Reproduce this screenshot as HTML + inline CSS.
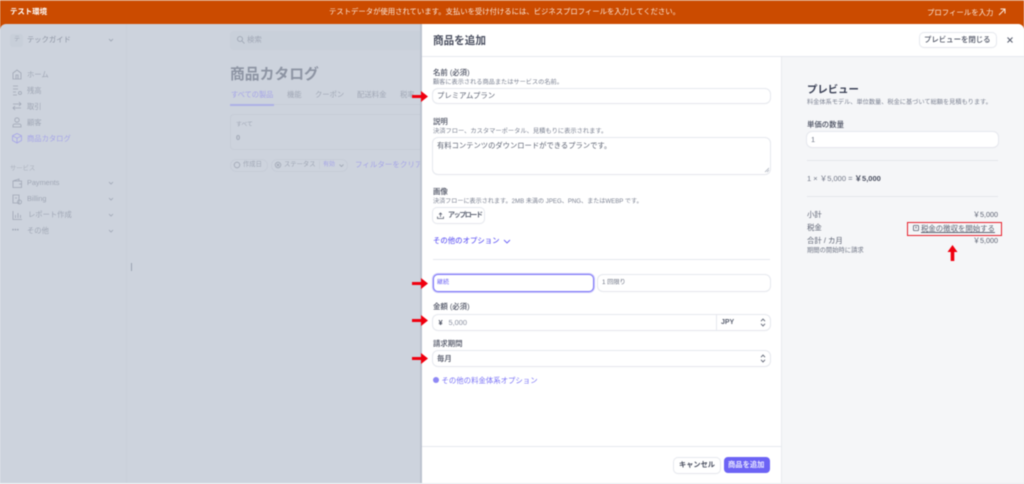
<!DOCTYPE html>
<html lang="ja"><head><meta charset="utf-8"><title>商品を追加</title>
<style>
*{box-sizing:border-box}
html,body{margin:0;padding:0;width:1024px;height:484px;overflow:hidden;background:#eef0f4}
body{font-family:"Liberation Sans","Noto Sans CJK JP",sans-serif;position:relative;color:#3c4257}
#r{position:absolute;left:0;top:0;width:1024px;height:484px;overflow:hidden;filter:blur(.4px)}
#bg{position:absolute;left:0;top:0;width:422px;height:484px}
.a{position:absolute;white-space:nowrap}
.t{position:absolute;white-space:nowrap;line-height:14px;height:14px}
.box{position:absolute;background:#fff;border-radius:5px;box-shadow:0 0 0 1px #e6e8ee,0 1px 1px rgba(60,66,87,.08)}
svg{position:absolute;overflow:visible}
.side{color:#a0a7b5;font-size:7.3px}
</style></head><body><div id="r">
<!-- banner -->
<div class="a" style="left:0;top:0;width:1024px;height:30px;background:#cb4b00;border-top:1px solid #dc8d5c"></div>
<div class="t" style="left:10px;top:5px;color:#fff;font-size:7.4px;font-weight:bold">テスト環境</div>
<div class="t" style="left:329px;top:5px;color:#fbe6d8;font-size:7.35px">テストデータが使用されています。支払いを受け付けるには、ビジネスプロフィールを入力してください。</div>
<div class="t" style="left:927px;top:6px;color:#fbe6d8;font-size:7.4px">プロフィールを入力</div>
<svg style="left:998px;top:8px" width="8" height="8" fill="none" stroke="#fbe6d8" stroke-width="1"><path d="M1 7L7 1M2.500 1H7V5.500"/></svg>
<!-- backdrop -->
<div class="a" style="left:0;top:24px;width:1024px;height:459px;background:#cdd3dd;border-radius:6px 6px 0 0"></div>
<div id="bg">
<div class="a" style="left:126px;top:24px;width:1px;height:459px;background:#c9d0da"></div>
<div class="a" style="left:131px;top:263px;width:1px;height:8px;background:#9aa2b0"></div>
<div class="a" style="left:10px;top:34px;width:13px;height:13px;border-radius:3px;background:#c8cfd9"></div>
<div class="t side" style="left:14px;top:33px;font-size:6px">テ</div>
<div class="t" style="left:27px;top:33px;font-size:7.3px;color:#8d94a3">テックガイド</div>
<svg style="left:108px;top:38px" width="6" height="4" fill="none" stroke="#9aa2b0" stroke-width=".8"><path d="M1 1l2 2 2-2"/></svg>
<!-- nav -->
<svg style="left:12px;top:69px" width="10" height="10" fill="none" stroke="#a0a7b5" stroke-width=".8"><path d="M1 10V4l4-3 4 3v6zM4 10V6h2v4"/></svg>
<svg style="left:12px;top:85px" width="10" height="10" fill="none" stroke="#a0a7b5" stroke-width=".8"><path d="M1 1h5M1 4h5M1 7h3M1 10h4"/><circle cx="8" cy="8" r="1.500"/></svg>
<svg style="left:12px;top:101px" width="10" height="10" fill="none" stroke="#a0a7b5" stroke-width=".8"><path d="M1 3h8M7 1l2 2-2 2M9 7H1M3 5L1 7l2 2"/></svg>
<svg style="left:12px;top:117px" width="10" height="10" fill="none" stroke="#a0a7b5" stroke-width=".8"><circle cx="5" cy="3" r="2.200"/><path d="M1 10V8.500C1 7.500 2 7 3 7h4c1 0 2 .5 2 1.500V10z"/></svg>
<svg style="left:12px;top:133px" width="10" height="10" fill="none" stroke="#a5a4e8" stroke-width=".8"><path d="M5 .5L9.500 2.800V7.500L5 10 .5 7.500V2.800zM.5 2.800L5 5.200 9.500 2.800M5 5.200V10"/></svg>
<div class="t side" style="left:27px;top:68px">ホーム</div>
<div class="t side" style="left:27px;top:84px">残高</div>
<div class="t side" style="left:27px;top:100px">取引</div>
<div class="t side" style="left:27px;top:116px">顧客</div>
<div class="t" style="left:27px;top:132px;font-size:7.3px;color:#a5a4e8">商品カタログ</div>
<div class="t" style="left:10px;top:162px;font-size:6.3px;color:#adb3bf">サービス</div>
<svg style="left:12px;top:178px" width="10" height="10" fill="none" stroke="#a0a7b5" stroke-width=".8"><path d="M1 3h8.500v6.500H1zM1 3l6-2v2M7 6h2.500"/></svg>
<svg style="left:12px;top:194px" width="10" height="10" fill="none" stroke="#a0a7b5" stroke-width=".8"><path d="M1 1h6v8H1zM3 4h2"/><circle cx="7.500" cy="8" r="2"/></svg>
<svg style="left:12px;top:210px" width="10" height="10" fill="none" stroke="#a0a7b5" stroke-width=".8"><path d="M1 1v8.500h9M3.500 8V5M6 8V3M8.500 8V5"/></svg>
<div class="t" style="left:12px;top:224px;font-size:6px;color:#a0a7b5;letter-spacing:.3px">•••</div>
<div class="t side" style="left:27px;top:176px;font-size:7.3px">Payments</div>
<div class="t side" style="left:27px;top:192px;font-size:7.3px">Billing</div>
<div class="t side" style="left:28px;top:208px">レポート作成</div>
<div class="t side" style="left:27px;top:224px">その他</div>
<svg style="left:108px;top:181px" width="6" height="4" fill="none" stroke="#a0a7b5" stroke-width=".8"><path d="M1 1l2 2 2-2"/></svg>
<svg style="left:108px;top:197px" width="6" height="4" fill="none" stroke="#a0a7b5" stroke-width=".8"><path d="M1 1l2 2 2-2"/></svg>
<svg style="left:108px;top:213px" width="6" height="4" fill="none" stroke="#a0a7b5" stroke-width=".8"><path d="M1 1l2 2 2-2"/></svg>
<svg style="left:108px;top:229px" width="6" height="4" fill="none" stroke="#a0a7b5" stroke-width=".8"><path d="M1 1l2 2 2-2"/></svg>
<!-- main -->
<div class="a" style="left:230px;top:31px;width:192px;height:19px;background:#c9d0da;border-radius:4px 0 0 4px"></div>
<svg style="left:237px;top:36px" width="8" height="8" fill="none" stroke="#9aa2b0" stroke-width=".8"><circle cx="3" cy="3" r="2.500"/><path d="M5 5l2.500 2.500"/></svg>
<div class="t" style="left:247px;top:33px;font-size:7.4px;color:#a0a7b5">検索</div>
<div class="a" style="left:230px;top:65px;font-size:14.8px;line-height:20px;font-weight:bold;color:#8d94a3">商品カタログ</div>
<div class="t" style="left:231px;top:88px;font-size:7.2px;color:#a5a4e8">すべての製品</div>
<div class="t side" style="left:287px;top:88px">機能</div>
<div class="t side" style="left:315px;top:88px">クーポン</div>
<div class="t side" style="left:357px;top:88px;font-size:7.4px">配送料金</div>
<div class="t side" style="left:400px;top:88px">税率</div>
<div class="a" style="left:230px;top:104px;width:192px;height:1px;background:#c6ccd7"></div>
<div class="a" style="left:230px;top:104px;width:44px;height:2px;background:#aeb0e6"></div>
<div class="a" style="left:230px;top:114px;width:192px;height:36px;border:1px solid #c6ccd7;border-right:0;border-radius:4px 0 0 4px"></div>
<div class="t side" style="left:236px;top:118px;font-size:5.8px">すべて</div>
<div class="t" style="left:236px;top:131px;font-size:7.5px;font-weight:bold;color:#a0a7b5">0</div>
<div class="a" style="left:230px;top:159px;width:38px;height:13px;border:1px solid #c6ccd7;border-radius:7px"></div>
<div class="a" style="left:271px;top:159px;width:77px;height:13px;border:1px solid #c6ccd7;border-radius:7px"></div>
<svg style="left:234px;top:162px" width="6" height="6" fill="none" stroke="#a0a7b5" stroke-width=".8"><circle cx="3" cy="3" r="2.800"/></svg>
<svg style="left:275px;top:162px" width="6" height="6" fill="none" stroke="#a0a7b5" stroke-width=".8"><circle cx="3" cy="3" r="2.800"/><path d="M1.800 1.800l2.400 2.400M4.200 1.800L1.800 4.200"/></svg>
<div class="t" style="left:243px;top:158px;font-size:6.3px;color:#a0a7b5">作成日</div>
<div class="t" style="left:284px;top:158px;font-size:6.3px;color:#a0a7b5">ステータス</div>
<div class="t" style="left:323px;top:158px;font-size:6px;color:#a5a4e8">有効</div>
<div class="a" style="left:319px;top:161px;width:1px;height:8px;background:#c6ccd7"></div>
<svg style="left:339px;top:164px" width="5" height="3" fill="none" stroke="#9aa2b0" stroke-width=".8"><path d="M.500.500l2 2 2-2"/></svg>
<div class="t" style="left:355px;top:158px;font-size:7.5px;color:#a5a4e8">フィルターをクリア</div>
</div>
<!-- modal -->
<div class="a" style="left:420px;top:24px;width:2px;height:459px;background:#bcc3cf"></div>
<div class="a" style="left:422px;top:24px;width:602px;height:459px;background:#fff;border-radius:0 6px 0 0"></div>
<div class="a" style="left:781px;top:57px;width:243px;height:426px;background:#f5f6f8;border-left:1px solid #e8eaef"></div>
<div class="a" style="left:422px;top:56px;width:602px;height:1px;background:#e6e8ee"></div>
<div class="a" style="left:433px;top:32px;font-size:10.6px;line-height:18px;font-weight:bold;color:#4a4f60">商品を追加</div>
<div class="box" style="left:920px;top:33px;width:76px;height:14px;border-radius:4px"></div>
<div class="t" style="left:924px;top:33px;font-size:7.4px;color:#4a4f60;font-weight:500">プレビューを閉じる</div>
<svg style="left:1006.500px;top:37px" width="6" height="6" fill="none" stroke="#555b6c" stroke-width="1"><path d="M.500.500l5 5M5.500 .500L.500 5.500"/></svg>
<!-- form -->
<div class="t" style="left:433px;top:66px;font-size:7.4px;color:#4a4f60;font-weight:500">名前 (必須)</div>
<div class="t" style="left:433px;top:76px;font-size:6.2px;color:#7b8191">顧客に表示される商品またはサービスの名前。</div>
<div class="box" style="left:433px;top:89px;width:337px;height:14px"></div>
<div class="t" style="left:437px;top:89px;font-size:7.4px;color:#5c6272">プレミアムプラン</div>
<div class="t" style="left:433px;top:115px;font-size:7.4px;color:#4a4f60;font-weight:500">説明</div>
<div class="t" style="left:433px;top:125px;font-size:6.25px;color:#7b8191">決済フロー、カスタマーポータル、見積もりに表示されます。</div>
<div class="box" style="left:433px;top:138px;width:337px;height:36px"></div>
<div class="t" style="left:437px;top:139px;font-size:7.3px;color:#5c6272">有料コンテンツのダウンロードができるプランです。</div>
<svg style="left:765px;top:168px" width="4" height="4" fill="none" stroke="#9aa0ae" stroke-width=".6"><path d="M0 4l4-4M2 4l2-2"/></svg>
<div class="t" style="left:433px;top:185px;font-size:7.4px;color:#4a4f60;font-weight:500">画像</div>
<div class="t" style="left:433px;top:195px;font-size:6.1px;color:#7b8191">決済フローに表示されます。2MB 未満の JPEG、PNG、またはWEBP です。</div>
<div class="box" style="left:433px;top:208px;width:51px;height:15px;border-radius:4px"></div>
<svg style="left:437px;top:212px" width="7" height="7" fill="none" stroke="#5c6272" stroke-width=".8"><path d="M.500 4.500v2h6v-2M3.500 5V1M2 2.500L3.500 1 5 2.500"/></svg>
<div class="t" style="left:448px;top:208.500px;font-size:7px;color:#5c6272;font-weight:bold;letter-spacing:-1.4px">アップロード</div>
<div class="t" style="left:433px;top:234px;font-size:7.4px;color:#6c63f5;font-weight:500">その他のオプション</div>
<svg style="left:502.500px;top:239px" width="8" height="5" fill="none" stroke="#6c63f5" stroke-width=".9"><path d="M1 1l3 3 3-3"/></svg>
<div class="a" style="left:433px;top:259px;width:337px;height:1px;background:#e6e8ee"></div>
<div class="a" style="left:432.500px;top:274px;width:161.500px;height:18px;background:#fff;border:1px solid #7a73f7;border-radius:5px;box-shadow:0 0 0 1px #c9c6fb"></div>
<div class="t" style="left:437px;top:276px;font-size:6px;color:#6c63f5">継続</div>
<div class="box" style="left:598px;top:275px;width:172px;height:16px"></div>
<div class="t" style="left:602px;top:276px;font-size:6.2px;color:#6f7585">1 回限り</div>
<div class="t" style="left:433px;top:300px;font-size:7.4px;color:#4a4f60;font-weight:500">金額 (必須)</div>
<div class="box" style="left:433px;top:315px;width:337px;height:15px"></div>
<div class="a" style="left:716px;top:315px;width:1px;height:15px;background:#e6e8ee"></div>
<div class="t" style="left:438.500px;top:315.500px;font-size:7.4px;color:#4a4f60;font-weight:bold">¥</div>
<div class="t" style="left:448.500px;top:316px;font-size:7.4px;color:#8a90a0">5,000</div>
<div class="t" style="left:721px;top:316px;font-size:7px;color:#5c6272;font-weight:bold">JPY</div>
<svg style="left:759.500px;top:318px" width="6" height="9" fill="none" stroke="#5c6272" stroke-width=".9"><path d="M1 3.200L3 1l2 2.200M1 5.800L3 8l2-2.200"/></svg>
<div class="t" style="left:433px;top:337px;font-size:7.4px;color:#4a4f60;font-weight:500">請求期間</div>
<div class="box" style="left:433px;top:351px;width:337px;height:15px"></div>
<div class="t" style="left:437px;top:352px;font-size:7.4px;color:#4a4f60;font-weight:500">毎月</div>
<svg style="left:759.500px;top:354px" width="6" height="9" fill="none" stroke="#5c6272" stroke-width=".9"><path d="M1 3.200L3 1l2 2.200M1 5.800L3 8l2-2.200"/></svg>
<div class="a" style="left:433px;top:377px;width:6px;height:6px;border-radius:50%;background:#8e88f5"></div>
<div class="t" style="left:441.500px;top:374px;font-size:7.4px;color:#7a73f7">その他の料金体系オプション</div>
<!-- footer -->
<div class="a" style="left:422px;top:446px;width:359px;height:1px;background:#e6e8ee"></div>
<div class="box" style="left:674px;top:457.500px;width:46px;height:15px;border-radius:4px"></div>
<div class="t" style="left:679px;top:458px;font-size:7.2px;color:#4a4f60;font-weight:bold">キャンセル</div>
<div class="a" style="left:724px;top:457px;width:46px;height:16px;border-radius:4px;background:#6c63f5"></div>
<div class="t" style="left:728px;top:458px;font-size:7.3px;color:#e8e6ff;font-weight:bold">商品を追加</div>
<!-- preview -->
<div class="t" style="left:807px;top:84px;font-size:10.4px;color:#3c4257;font-weight:bold">プレビュー</div>
<div class="t" style="left:807px;top:96px;font-size:6.2px;color:#7b8191">料金体系モデル、単位数量、税金に基づいて総額を見積もります。</div>
<div class="t" style="left:807px;top:118px;font-size:7.4px;color:#4a4f60;font-weight:500">単価の数量</div>
<div class="box" style="left:807px;top:132px;width:191px;height:15px"></div>
<div class="t" style="left:811px;top:133px;font-size:7.4px;color:#6f7585">1</div>
<div class="a" style="left:807px;top:160px;width:191px;height:1px;background:#e4e6eb"></div>
<div class="t" style="left:807px;top:172px;font-size:7.5px;color:#6f7585">1 × ￥5,000 = <b style="color:#4a4f60">￥5,000</b></div>
<div class="a" style="left:807px;top:196px;width:191px;height:1px;background:#e4e6eb"></div>
<div class="t" style="left:807px;top:208px;font-size:7.4px;color:#5c6272">小計</div>
<div class="t" style="right:26px;top:208px;font-size:7.2px;color:#5c6272">￥5,000</div>
<div class="t" style="left:807px;top:221px;font-size:7.4px;color:#5c6272">税金</div>
<svg style="left:913px;top:225px" width="6" height="6" fill="none" stroke="#5c6272" stroke-width=".8"><rect x=".400" y=".400" width="5.200" height="5.200" rx="1"/><path d="M3 1.500v2"/></svg>
<div class="t" style="left:921px;top:222px;font-size:7.4px;color:#5c6272;text-decoration:underline">税金の徴収を開始する</div>
<div class="a" style="left:907px;top:221.500px;width:95px;height:14.500px;border:1.600px solid #e8202c;background:transparent"></div>
<div class="t" style="left:807px;top:234px;font-size:7.4px;color:#5c6272">合計 / カ月</div>
<div class="t" style="right:26px;top:234px;font-size:7.2px;color:#5c6272">￥5,000</div>
<div class="t" style="left:807px;top:244px;font-size:6.3px;color:#6f7585">期間の開始時に請求</div>
<!-- arrows -->
<svg style="left:412px;top:91px" width="20" height="11" fill="#f0000f"><path d="M0 4h9V0l7 5.500-7 5.500V7H0z"/></svg>
<svg style="left:412px;top:278px" width="20" height="11" fill="#f0000f"><path d="M0 4h9V0l7 5.500-7 5.500V7H0z"/></svg>
<svg style="left:412px;top:315px" width="20" height="11" fill="#f0000f"><path d="M0 4h9V0l7 5.500-7 5.500V7H0z"/></svg>
<svg style="left:412px;top:353px" width="20" height="11" fill="#f0000f"><path d="M0 4h9V0l7 5.500-7 5.500V7H0z"/></svg>
<svg style="left:946.500px;top:245px" width="12" height="16" fill="#f0000f"><path d="M5.500 0l5 7H7.300v9H3.700V7H.500z"/></svg>
</div></body></html>
